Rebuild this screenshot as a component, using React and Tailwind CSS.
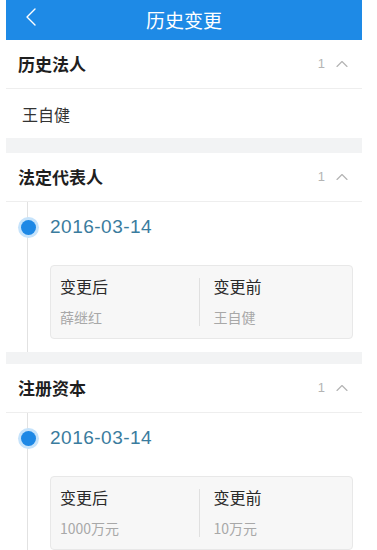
import { ChevronUp } from 'lucide-react';

const font = { fontFamily: '"Noto Sans CJK SC", "Noto Sans", sans-serif' };
const numFont = { fontFamily: '"Liberation Sans", "Noto Sans CJK SC", sans-serif' };

function SectionHeader({ title, count }) {
    return (
        <div className="h-[49px] flex items-center justify-between pl-3 pr-[10px] border-b border-[#eeeeee]">
            <span className="text-[17px] font-bold text-[#1f1f1f]">{title}</span>
            <div className="flex items-center gap-[7px] text-[#b4b4b4]">
                <span className="text-[13px]" style={numFont}>{count}</span>
                <ChevronUp className="w-[20px] h-[20px]" strokeWidth={1.4} />
            </div>
        </div>
    );
}

function Change({ date, after, before }) {
    return (
        <div className="relative pl-[44px] pr-[9px] pt-[13px] pb-[13px]">
            {/* timeline line */}
            <div className="absolute left-[21px] top-0 bottom-0 w-px bg-[#e2e2e2]" />
            <div className="flex items-center h-[24px] relative">
                <span className="absolute left-[-29px] w-[15px] h-[15px] rounded-full bg-[#1e88e5] ring-[3px] ring-[#c6e3fb]" />
                <span className="text-[19px] text-[#3a7c9e] tracking-[0.5px]" style={numFont}>{date}</span>
            </div>
            <div className="mt-[26px] bg-[#f7f7f7] border border-[#e8e8e8] rounded-[4px] flex h-[74px]">
                <div className="flex-1 pl-[9px] pt-[10px]">
                    <div className="text-[16px] text-[#2a2a2a] leading-[20px]">变更后</div>
                    <div className="text-[14px] text-[#a8a8a8] mt-[13px] leading-[16px]">{after}</div>
                </div>
                <div className="w-px bg-[#e0e0e0] my-[12px]" />
                <div className="flex-1 pl-[14px] pt-[10px]">
                    <div className="text-[16px] text-[#2a2a2a] leading-[20px]">变更前</div>
                    <div className="text-[14px] text-[#a8a8a8] mt-[13px] leading-[16px]">{before}</div>
                </div>
            </div>
        </div>
    );
}

export default function App() {
    return (
        <div className="w-[377px] h-[550px] overflow-hidden bg-white px-[6px]" style={font}>
            <div className="w-[356px]">
                <div className="h-[40px] bg-[#1e8ae6] relative flex items-center justify-center">
                    <svg className="absolute left-[19px] top-[8px]" width="11" height="18" viewBox="0 0 11 18" fill="none">
                        <polyline points="10,1 2,9 10,17" stroke="white" strokeWidth="1.4" strokeLinecap="round" strokeLinejoin="round" />
                    </svg>
                    <span className="text-[19px] text-white">历史变更</span>
                </div>

                <SectionHeader title="历史法人" count="1" />
                <div className="h-[49px] flex items-center pl-[16px] text-[16px] text-[#333333]">王自健</div>

                <div className="h-[15px] bg-[#f2f3f4]" />

                <SectionHeader title="法定代表人" count="1" />
                <Change date="2016-03-14" after="薛继红" before="王自健" />

                <div className="h-[12px] bg-[#f2f3f4]" />

                <SectionHeader title="注册资本" count="1" />
                <Change date="2016-03-14" after="1000万元" before="10万元" />
            </div>
        </div>
    );
}
